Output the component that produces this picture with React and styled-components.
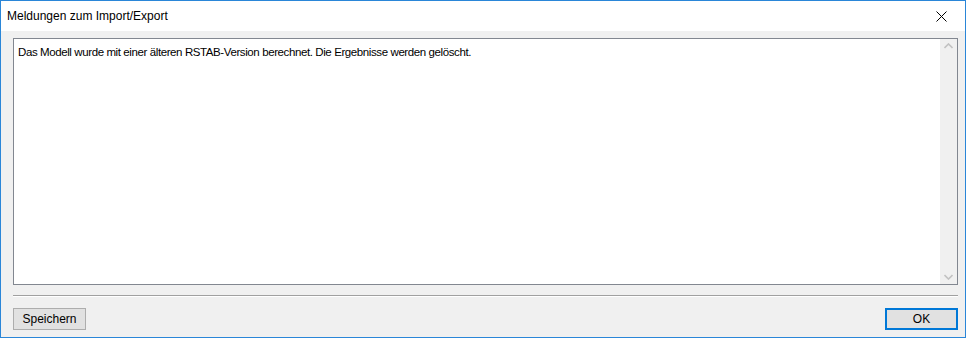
import React from 'react'
import styled, { createGlobalStyle } from 'styled-components'

const Global = createGlobalStyle`
  html, body {
    margin: 0;
    padding: 0;
    background: #ffffff;
  }
  * {
    box-sizing: border-box;
  }
`

const Window = styled.div`
  width: 966px;
  height: 338px;
  border: 1px solid #2a86d8;
  display: flex;
  flex-direction: column;
  font-family: 'Liberation Sans', Arial, sans-serif;
  font-size: 12px;
  color: #000;
  background: #f0f0f0;
`

const TitleBar = styled.div`
  height: 30px;
  flex: 0 0 30px;
  background: #ffffff;
  display: flex;
  align-items: center;
  justify-content: space-between;
  padding-left: 6px;
`

const Title = styled.span`
  font-size: 12px;
  padding-bottom: 1px;
`

const CloseButton = styled.div`
  width: 46px;
  height: 30px;
  display: flex;
  align-items: center;
  justify-content: center;
  margin-right: 1px;
`

const Client = styled.div`
  flex: 1;
  display: flex;
  flex-direction: column;
  padding: 7px 7px 0 12px;
`

const MessageBox = styled.div`
  height: 247px;
  border: 1px solid #828790;
  background: #ffffff;
  display: flex;
`

const MessageText = styled.div`
  flex: 1;
  padding: 6px 4px;
  font-size: 11.5px;
  letter-spacing: -0.4px;
  line-height: 14px;
`

const ScrollBar = styled.div`
  width: 17px;
  background: #f0f0f0;
  display: flex;
  flex-direction: column;
  justify-content: space-between;
  align-items: center;
  padding: 4px 0;
`

const Separator = styled.div`
  margin-top: 10px;
  height: 2px;
  border-top: 1px solid #a0a0a0;
  border-bottom: 1px solid #ffffff;
`

const ButtonRow = styled.div`
  margin-top: 11px;
  display: flex;
  justify-content: space-between;
`

const Button = styled.div`
  height: 22px;
  width: ${p => p.$width}px;
  background: #e1e1e1;
  border: ${p => (p.$default ? '2px solid #0078d7' : '1px solid #adadad')};
  display: flex;
  align-items: center;
  justify-content: center;
  font-size: 12px;
`

const Chevron = ({ up }) => (
  <svg width="9" height="6" viewBox="0 0 9 6">
    <path
      d={up ? 'M0.5 5 L4.5 1 L8.5 5' : 'M0.5 1 L4.5 5 L8.5 1'}
      fill="none"
      stroke="#c2c2c2"
      strokeWidth="1.6"
    />
  </svg>
)

export default function App() {
  return (
    <>
      <Global />
      <Window>
        <TitleBar>
          <Title>Meldungen zum Import/Export</Title>
          <CloseButton>
            <svg width="11" height="11" viewBox="0 0 11 11">
              <path d="M0.5 0.5 L10.5 10.5 M10.5 0.5 L0.5 10.5" stroke="#000" strokeWidth="1" />
            </svg>
          </CloseButton>
        </TitleBar>
        <Client>
          <MessageBox>
            <MessageText>
              Das Modell wurde mit einer älteren RSTAB-Version berechnet. Die Ergebnisse werden gelöscht.
            </MessageText>
            <ScrollBar>
              <Chevron up />
              <Chevron />
            </ScrollBar>
          </MessageBox>
          <Separator />
          <ButtonRow>
            <Button $width={73}>Speichern</Button>
            <Button $width={73} $default>OK</Button>
          </ButtonRow>
        </Client>
      </Window>
    </>
  )
}
